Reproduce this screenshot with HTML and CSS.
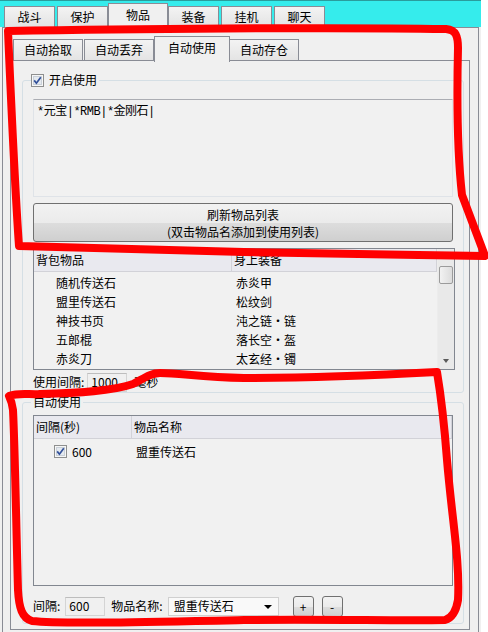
FILE: index.html
```html
<!DOCTYPE html>
<html lang="zh-CN">

<head>
    <meta charset="UTF-8">
    <meta name="viewport" content="width=device-width, initial-scale=1.0">
    <title>物品</title>
    <link rel="stylesheet" href="styles.css">
</head>

<body>
    <div class="window">
        <!-- Top tabs -->
        <div class="top-tabs">
            <div class="tab">战斗</div>
            <div class="tab">保护</div>
            <div class="tab active">物品</div>
            <div class="tab">装备</div>
            <div class="tab">挂机</div>
            <div class="tab">聊天</div>
        </div>

        <div class="page">
            <div class="sub-tabs">
                <div class="sub-tab">自动拾取</div>
                <div class="sub-tab">自动丢弃</div>
                <div class="sub-tab active">自动使用</div>
                <div class="sub-tab">自动存仓</div>
            </div>

            <div class="sub-page">
                <!-- 开启使用 -->
                <div class="group group-use">
                    <div class="group-title">
                        <svg class="checkbox" width="13" height="13" viewBox="0 0 13 13">
                            <rect x="0.5" y="0.5" width="12" height="12" fill="#f6f6f6" stroke="#8e8f8f" />
                            <rect x="2.5" y="2.5" width="8" height="8" fill="#e4e9ef" stroke="#c9d0d8" />
                            <path d="M3.2 6.4 L5.4 9.2 L9.8 3.2" fill="none" stroke="#32509a" stroke-width="1.7" />
                        </svg>
                        <span>开启使用</span>
                    </div>
                    <div class="text-box">*元宝|*RMB|*金刚石|</div>
                    <button class="big-btn">刷新物品列表<br>(双击物品名添加到使用列表)</button>

                    <div class="list-view bag-list">
                        <div class="lv-main">
                            <div class="lv-header">
                                <div class="col col-bag">背包物品</div>
                                <div class="col col-equip">身上装备</div>
                            </div>
                            <div class="lv-body">
                                <div class="lv-row"><div class="col col-bag">随机传送石</div><div class="col col-equip">赤炎甲</div></div>
                                <div class="lv-row"><div class="col col-bag">盟里传送石</div><div class="col col-equip">松纹剑</div></div>
                                <div class="lv-row"><div class="col col-bag">神技书页</div><div class="col col-equip">沌之链·链</div></div>
                                <div class="lv-row"><div class="col col-bag">五郎棍</div><div class="col col-equip">落长空·盔</div></div>
                                <div class="lv-row"><div class="col col-bag">赤炎刀</div><div class="col col-equip">太玄经·镯</div></div>
                            </div>
                        </div>
                        <div class="scrollbar">
                            <div class="sb-btn"></div>
                            <div class="sb-thumb"></div>
                            <div class="sb-track"></div>
                            <div class="sb-btn"><span class="sb-arrow"></span></div>
                        </div>
                    </div>

                    <div class="field-row interval-row">
                        <span>使用间隔:</span>
                        <div class="input input-ms">1000</div>
                        <span>毫秒</span>
                    </div>
                </div>

                <!-- 自动使用 -->
                <div class="group group-auto">
                    <div class="group-title plain">自动使用</div>

                    <div class="list-view use-list">
                        <div class="lv-main">
                            <div class="lv-header">
                                <div class="col col-sec">间隔(秒)</div>
                                <div class="col col-name">物品名称</div>
                            </div>
                            <div class="lv-body">
                                <div class="lv-row use-row">
                                    <div class="col col-sec">
                                        <svg class="checkbox" width="13" height="13" viewBox="0 0 13 13">
                                            <rect x="0.5" y="0.5" width="12" height="12" fill="#f6f6f6" stroke="#8e8f8f" />
                                            <rect x="2.5" y="2.5" width="8" height="8" fill="#e4e9ef" stroke="#c9d0d8" />
                                            <path d="M3.2 6.4 L5.4 9.2 L9.8 3.2" fill="none" stroke="#32509a" stroke-width="1.7" />
                                        </svg>
                                        <span>600</span>
                                    </div>
                                    <div class="col col-name">盟重传送石</div>
                                </div>
                            </div>
                        </div>
                    </div>

                    <div class="field-row bottom-row">
                        <span>间隔:</span>
                        <div class="input input-sec">600</div>
                        <span class="name-label">物品名称:</span>
                        <div class="combo">
                            <span>盟重传送石</span>
                            <span class="combo-arrow"></span>
                        </div>
                        <button class="small-btn">+</button>
                        <button class="small-btn">-</button>
                    </div>
                </div>
            </div>
        </div>
    </div>

    <!-- hand-drawn marks -->
    <svg class="marks" width="488" height="632" viewBox="0 0 488 632">
        <path d="M8,31 C120,29 330,27 446,29 C456,30 458,36 458,48 C457,90 457,150 462,195 L485,256 C400,255 300,253 244,252 C150,250 80,248 19,246 C15,190 11,100 8,31 Z" />
        <path d="M9,396 C20,392 30,395 40,394 C80,393 112,391 133,384 C143,379 150,373 160,373 C180,373 200,377 244,378 C320,378 400,374 437,372 C440,390 444,420 447,460 C452,520 460,560 458,600 C456,612 452,618 445,620 C400,621 330,619 244,620 C150,622 60,624 32,621 C22,618 19,608 18,590 C16,520 15,450 13,410 C12,402 10,398 9,396 Z" />
    </svg>
</body>

</html>
```

FILE: styles.css
```css
* {
    box-sizing: border-box;
}

body {
    margin: 0;
    width: 488px;
    height: 632px;
    overflow: hidden;
    position: relative;
    background: #fff;
    font: 12px/1.2 "Noto Sans CJK SC", sans-serif;
    color: #000;
}

.window {
    width: 481px;
    height: 632px;
    background: #f0f0f0;
    display: flex;
    flex-direction: column;
}

/* top tabs */
.top-tabs {
    height: 27px;
    flex: none;
    display: flex;
    align-items: flex-end;
    padding-left: 4px;
    background: #35ecec;
    border-top: 1px solid #2a9c9c;
}

.tab {
    width: 51px;
    height: 21px;
    margin-right: 2px;
    display: flex;
    align-items: center;
    justify-content: center;
    border: 1px solid #898c95;
    border-bottom: none;
    background: linear-gradient(#f3f3f3, #e3e3e3);
}

.tab.active {
    position: relative;
    width: 60px;
    height: 25px;
    margin: 0 0 -1px -2px;
    background: #f0f0f0;
    padding-bottom: 2px;
}

.page {
    flex: 1;
    width: 477px;
    margin-left: 2px;
    border: 1px solid #898c95;
    border-bottom: none;
    padding: 7px 8px 0 7px;
    display: flex;
    flex-direction: column;
}

/* sub tabs */
.sub-tabs {
    height: 26px;
    flex: none;
    display: flex;
    align-items: flex-end;
    padding-left: 3px;
}

.sub-tab {
    height: 22px;
    padding: 0 10px;
    margin-right: 1px;
    display: flex;
    align-items: center;
    border: 1px solid #898c95;
    border-bottom: none;
    background: linear-gradient(#f3f3f3, #e3e3e3);
}

.sub-tab.active {
    position: relative;
    height: 26px;
    padding: 0 13px 3px;
    margin: 0 -1px -1px -1px;
    background: #f0f0f0;
}

.sub-page {
    flex: 1;
    margin: -1px 0 2px;
    border: 1px solid #898c95;
    padding: 19px 5px 0 11px;
}

/* group boxes */
.group {
    position: relative;
    border: 1px solid #d5dfe5;
    border-radius: 3px;
    padding: 18px 10px 0;
}

.group-title {
    position: absolute;
    top: -8px;
    left: 8px;
    height: 14px;
    display: flex;
    align-items: center;
    gap: 5px;
    padding-right: 2px;
    background: #f0f0f0;
}

.group-title.plain {
    left: 8px;
    padding: 0 2px;
}

.checkbox {
    display: block;
    flex: none;
}

.text-box {
    height: 98px;
    padding: 5px 3px;
    border: 1px solid #dfe3e8;
    border-top-color: #abadb3;
    background: #f1f1f1;
    font: 12px/1.2 "Liberation Mono", "Noto Sans CJK SC", monospace;
    letter-spacing: -0.5px;
}

.big-btn {
    display: block;
    width: 100%;
    height: 39px;
    margin-top: 6px;
    padding: 0;
    border: 1px solid #707070;
    border-radius: 3px;
    background: linear-gradient(#f2f2f2 0%, #ebebeb 50%, #dddddd 51%, #cfcfcf 100%);
    font: 12px/17px "Noto Sans CJK SC", sans-serif;
    color: #000;
}

/* list views */
.list-view {
    display: flex;
    border: 1px solid #828790;
    background: #f1f1f1;
    overflow: hidden;
}

.bag-list {
    height: 122px;
    margin-top: 6px;
    margin-right: -2px;
}

.use-list {
    height: 171px;
}

.lv-main {
    flex: 1;
    min-width: 0;
}

.lv-header {
    height: 23px;
    display: flex;
    background: #e9e9ef;
    border-bottom: 1px solid #d2d2d8;
}

.lv-header .col {
    display: flex;
    align-items: center;
    padding-left: 2px;
    border-right: 1px solid #d2d2d8;
}

.lv-body {
    padding-top: 2px;
}

.lv-row {
    height: 19px;
    display: flex;
    align-items: center;
}

.col-bag {
    width: 198px;
}

.lv-row .col-bag {
    padding-left: 22px;
}

.col-equip {
    flex: 1;
}

.lv-row .col-equip {
    padding-left: 4px;
}

.col-sec {
    width: 98px;
}

.col-name {
    flex: 1;
}

.use-list .lv-body {
    padding-top: 3px;
}

.use-row {
    height: 20px;
}

.use-row .col-sec {
    display: flex;
    align-items: center;
    gap: 5px;
    padding-left: 20px;
}

.use-row .col-name {
    padding-left: 4px;
}

.scrollbar {
    width: 17px;
    flex: none;
    display: flex;
    flex-direction: column;
    background: #e9e9e9;
    border-left: 1px solid #ececec;
}

.sb-btn {
    height: 17px;
    display: flex;
    align-items: center;
    justify-content: center;
}

.sb-thumb {
    height: 18px;
    margin: 0 1px;
    border: 1px solid #9b9b9b;
    border-radius: 2px;
    background: linear-gradient(90deg, #f2f2f2, #dcdcdc);
}

.sb-track {
    flex: 1;
}

.sb-arrow {
    width: 0;
    height: 0;
    border-left: 3px solid transparent;
    border-right: 3px solid transparent;
    border-top: 4px solid #5a5a5a;
}

/* inputs */
.field-row {
    display: flex;
    align-items: center;
}

.interval-row {
    height: 20px;
    margin-top: 2px;
}

.input {
    height: 19px;
    width: 40px;
    display: flex;
    align-items: center;
    padding-left: 3px;
    border: 1px solid #d4d4d4;
    border-top-color: #bdbdbd;
    background: #f0f0f0;
}

.input-ms {
    margin: 0 7px 0 3px;
}

.group-auto {
    margin-top: 9px;
    padding-top: 12px;
    padding-bottom: 6px;
}

.bottom-row {
    height: 21px;
    margin-top: 10px;
}

.input-sec {
    margin: 0 6px 0 5px;
}

.combo {
    width: 111px;
    height: 19px;
    margin-left: 5px;
    display: flex;
    align-items: center;
    justify-content: space-between;
    padding: 0 6px 0 5px;
    border: 1px solid #d0d0d0;
    background: #f9f9f9;
}

.combo-arrow {
    width: 0;
    height: 0;
    border-left: 4px solid transparent;
    border-right: 4px solid transparent;
    border-top: 4px solid #000;
}

.small-btn {
    width: 21px;
    height: 21px;
    margin-left: 14px;
    padding: 0;
    border: 1px solid #707070;
    border-radius: 3px;
    background: linear-gradient(#f2f2f2 0%, #ebebeb 50%, #dddddd 51%, #cfcfcf 100%);
    font: 12px/1 "Noto Sans CJK SC", sans-serif;
    color: #000;
}

.small-btn + .small-btn {
    margin-left: 8px;
}

/* red marks drawn over the screenshot */
.marks {
    position: absolute;
    top: 0;
    left: 0;
    pointer-events: none;
}

.marks path {
    fill: none;
    stroke: #ff0000;
    stroke-width: 8;
    stroke-linejoin: round;
    stroke-linecap: round;
}
```
